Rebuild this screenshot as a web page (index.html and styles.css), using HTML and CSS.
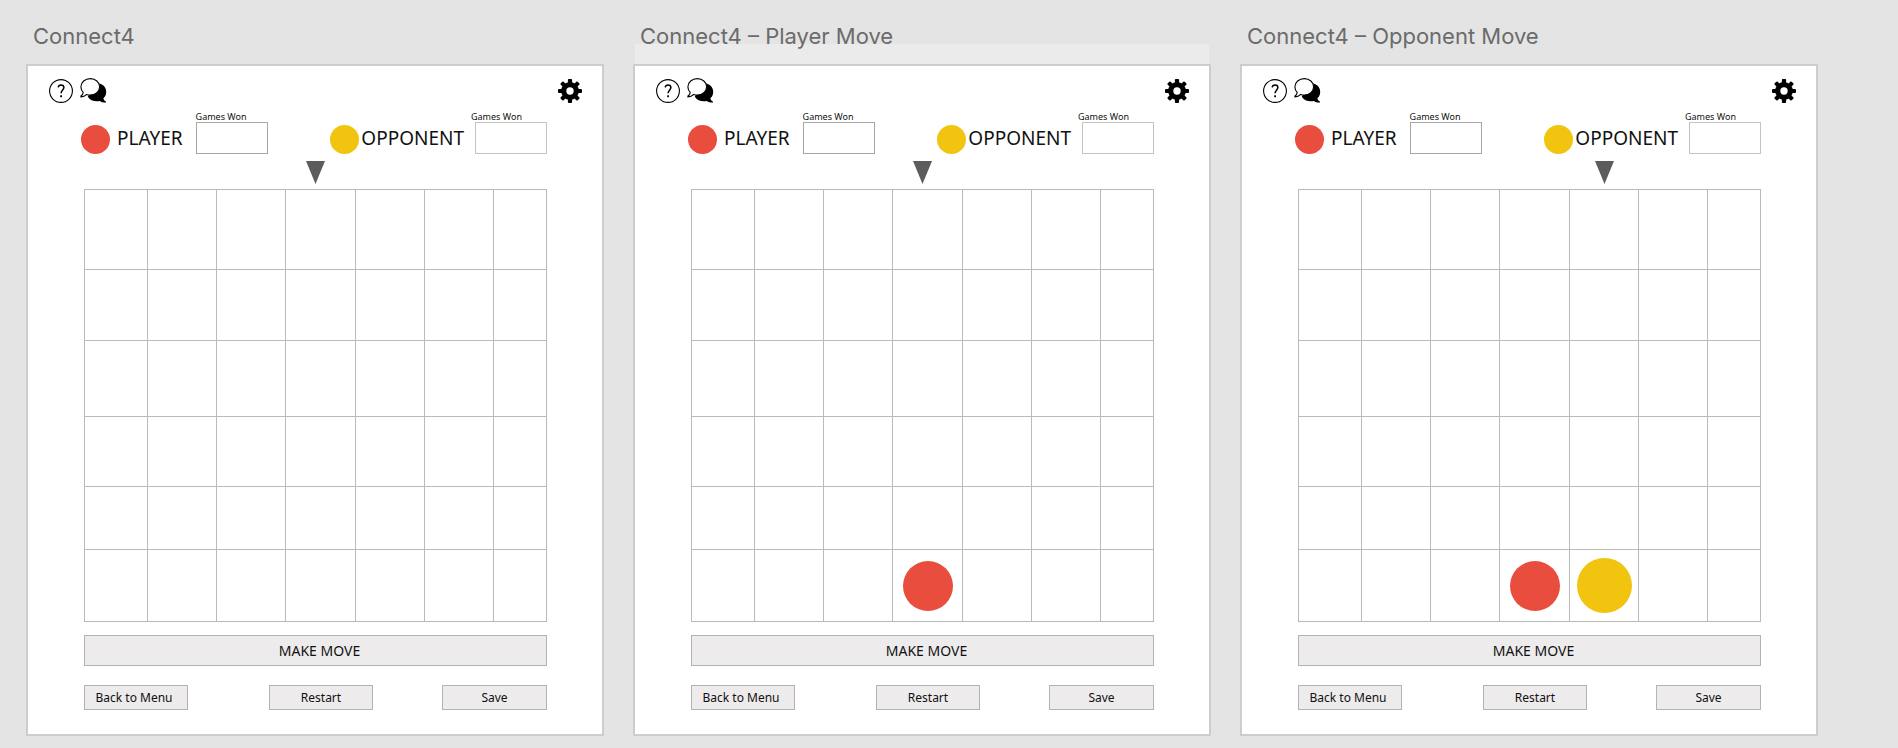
FILE: index.html
```html
<!DOCTYPE html>
<html lang="en">
<head>
<meta charset="utf-8">
<title>Connect4</title>
<link rel="stylesheet" href="styles.css">
</head>
<body>
<svg class="sprite" aria-hidden="true">
  <symbol id="icon-help" viewBox="0 0 24 24">
    <circle cx="12" cy="12" r="11.4" fill="none" stroke="#000" stroke-width="1.1"/>
    <path d="M9.2 8.3C9.4 6.9 10.5 6 12 6c1.700 0 2.900 1 2.900 2.600 0 2.200-2.800 2.700-2.800 5.700" fill="none" stroke="#000" stroke-width="1.500"/>
    <rect x="11.200" y="16.300" width="1.800" height="1.900"/>
  </symbol>
  <symbol id="icon-chat" viewBox="0 0 27 25">
    <path d="M16 5c6 0 10.200 3.800 10.200 8.800 0 2.700-1 4.900-2.800 6.500 .2 1.500 1.200 2.600 2.600 3.300v1c-2.500.1-4.600-.4-6.200-1.500-5 .9-9.800-.5-12-4.300z"/>
    <path d="M10.300.6c5.200 0 9.300 3.600 9.300 8.200s-4.100 8.200-9.300 8.200c-1.300 0-2.500-.2-3.600-.6C5.200 17.900 3.200 18.800.9 18.900v-.8c1.400-.8 2.200-2 2.300-3.700C1.700 13 .9 11 .9 8.800.9 4.200 5.100.6 10.300.6z" fill="#fff" stroke="#000" stroke-width="1.100"/>
  </symbol>
  <symbol id="icon-gear" viewBox="0 0 24 24">
    <g>
      <rect x="9.900" y="0" width="4.200" height="24" rx="1"/>
      <rect x="9.900" y="0" width="4.200" height="24" rx="1" transform="rotate(45 12 12)"/>
      <rect x="9.900" y="0" width="4.200" height="24" rx="1" transform="rotate(90 12 12)"/>
      <rect x="9.900" y="0" width="4.200" height="24" rx="1" transform="rotate(135 12 12)"/>
      <circle cx="12" cy="12" r="8.900"/>
    </g>
    <circle cx="12" cy="12" r="3.700" fill="#fff"/>
  </symbol>
</svg>
<main class="canvas" id="canvas"></main>
<template id="artboard">
  <section class="artboard">
    <h2 class="title"></h2>
    <div class="screen">
      <header class="toolbar">
        <button class="tool" aria-label="Help"><svg width="24" height="24"><use href="#icon-help"/></svg></button>
        <button class="tool" aria-label="Chat"><svg width="27" height="25"><use href="#icon-chat"/></svg></button>
        <button class="tool tool-end" aria-label="Settings"><svg width="24" height="24"><use href="#icon-gear"/></svg></button>
      </header>
      <div class="scores">
        <div class="side">
          <span class="disc red"></span>
          <span class="name name-player">PLAYER</span>
          <label class="won"><span>Games Won</span><input class="count" type="text"></label>
        </div>
        <div class="side">
          <span class="disc yellow"></span>
          <span class="name name-opponent">OPPONENT</span>
          <label class="won won-end"><span>Games Won</span><input class="count light" type="text"></label>
        </div>
      </div>
      <div class="turn"><svg class="arrow" width="19" height="23" viewBox="0 0 19 23"><path d="M0 0h19L9.500 23z" fill="#5c5c5c"/></svg></div>
      <div class="board"></div>
      <button class="btn move">MAKE MOVE</button>
      <div class="actions">
        <button class="btn small back">Back to Menu</button>
        <button class="btn small">Restart</button>
        <button class="btn small save">Save</button>
      </div>
    </div>
  </section>
</template>
<script src="app.js"></script>
</body>
</html>
```
FILE: styles.css
```css
* { box-sizing: border-box; }
body {
  margin: 0;
  min-height: 100vh;
  background: #e4e4e4;
  font-family: "Noto Sans", sans-serif;
  color: #111;
}
.sprite { position: absolute; width: 0; height: 0; }
.canvas {
  display: grid;
  grid-template-columns: repeat(3, 1fr);
  gap: 29px;
  padding: 0 80px 12px 26px;
}
.title {
  height: 64px;
  margin: 0;
  padding: 22px 0 0 7px;
  font: 400 22px/28px Inter, sans-serif;
  color: #6b6b6b;
}
.selected .title {
  background: linear-gradient(#ebebeb, #ebebeb) 2px 44px / calc(100% - 4px) 20px no-repeat;
}
.screen {
  padding: 12px 55px 24px 56px;
  background: #fff;
  border: 2px solid #cdcdcd;
}
.toolbar {
  display: flex;
  align-items: center;
  gap: 7px;
  height: 25px;
  margin: 0 -35px;
}
.tool { padding: 0; border: 0; background: none; display: flex; }
.tool-end { margin-left: auto; }
.scores {
  display: flex;
  justify-content: space-between;
  margin: 9px 0 0 -3px;
}
.side { display: flex; align-items: flex-end; }
.disc { width: 29px; height: 29px; border-radius: 50%; }
.red { background: #e84d3d; }
.yellow { background: #f1c410; }
.name { font-size: 19px; line-height: 32px; }
.name-player { margin: 0 13px 0 7px; }
.name-opponent { margin: 0 7px 0 2px; }
.won {
  display: flex;
  flex-direction: column;
  width: 72px;
  font-size: 9px;
  line-height: 10px;
}
.won-end { width: 76px; align-items: flex-end; }
.won-end span { width: 100%; }
.count {
  width: 72px;
  height: 32px;
  padding: 0 8px;
  border: 1px solid #a6a6a6;
  background: #fff;
  font: inherit;
}
.light { border-color: #c4c4c4; }
.turn, .board {
  display: grid;
  grid-template-columns: 63fr 69fr 69fr 70fr 69fr 69fr 53fr;
}
.turn { margin: 7px 0 5px; }
.arrow { display: block; grid-column: 1 / -1; justify-self: center; }
.opponent-turn .arrow { grid-column: 5; }
.board {
  grid-template-rows: 80px 71px 76px 70px 63px 72px;
  border: solid #b9b9b9;
  border-width: 0 1px 1px 0;
}
.cell {
  display: grid;
  place-items: center;
  border: solid #bababa;
  border-width: 1px 0 0 1px;
}
.piece { width: 50px; height: 50px; border-radius: 50%; }
.piece.yellow { width: 55px; height: 55px; }
.btn {
  padding: 0;
  border: 1px solid #b3b3b3;
  background: #edebec;
  color: #111;
  font-family: inherit;
}
.move {
  display: block;
  width: 100%;
  height: 31px;
  margin: 13px 0 19px;
  padding-left: 8px;
  font-size: 14px;
}
.actions {
  display: grid;
  grid-template-columns: 185fr 173fr 105px;
}
.small { width: 104px; height: 25px; font-size: 12px; }
.back { padding-right: 4px; }
.save { width: 105px; }
```
FILE: app.js
```js
const COLUMNS = 7;
const ROWS = 6;

const screens = [
  { title: "Connect4", pieces: {} },
  { title: "Connect4 – Player Move", className: "selected", pieces: { "5,3": "red" } },
  { title: "Connect4 – Opponent Move", className: "opponent-turn", pieces: { "5,3": "red", "5,4": "yellow" } }
];

const canvas = document.getElementById("canvas");
const template = document.getElementById("artboard");

for (const screen of screens) {
  const node = template.content.cloneNode(true);
  if (screen.className) node.querySelector(".artboard").classList.add(screen.className);
  node.querySelector(".title").textContent = screen.title;
  const board = node.querySelector(".board");
  for (let row = 0; row < ROWS; row++) {
    for (let column = 0; column < COLUMNS; column++) {
      const cell = document.createElement("div");
      cell.className = "cell";
      const color = screen.pieces[`${row},${column}`];
      if (color) {
        const piece = document.createElement("span");
        piece.className = `piece ${color}`;
        cell.append(piece);
      }
      board.append(cell);
    }
  }
  canvas.append(node);
}
```
